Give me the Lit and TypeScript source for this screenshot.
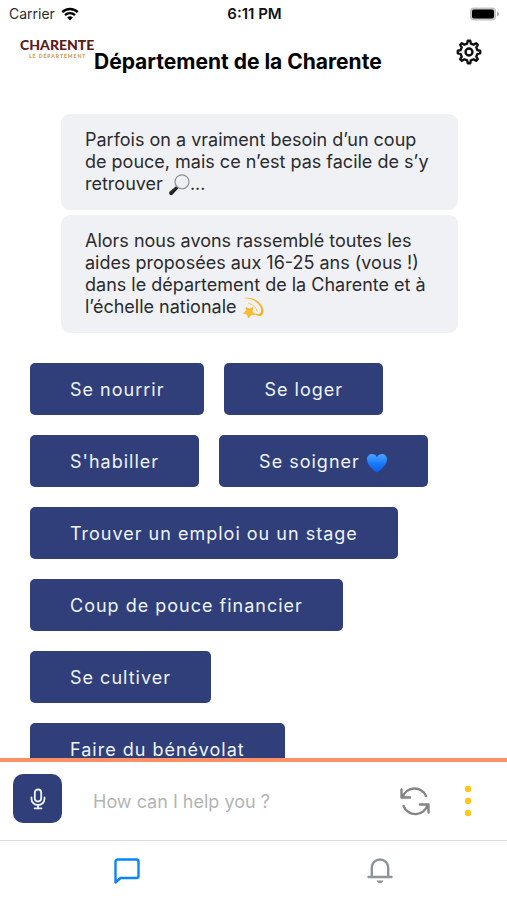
import { LitElement, html, css, svg } from "lit";
import { customElement } from "lit/decorators.js";

/** Outline of a cog with the given number of teeth, centred on 12,12. */
function cogPath(teeth: number, outer: number, inner: number): string {
  const step = (Math.PI * 2) / teeth;
  const at = (radius: number, angle: number) =>
    `${(12 + radius * Math.sin(angle)).toFixed(2)} ${(12 - radius * Math.cos(angle)).toFixed(2)}`;
  const parts: string[] = [];
  for (let i = 0; i < teeth; i++) {
    const a = i * step;
    parts.push(`${i ? "L" : "M"}${at(inner, a - step * 0.27)}`);
    parts.push(`L${at(outer, a - step * 0.14)}`);
    parts.push(`L${at(outer, a + step * 0.14)}`);
    parts.push(`L${at(inner, a + step * 0.27)}`);
  }
  return parts.join("") + "Z";
}

const wifiIcon = html`<svg class="wifi" viewBox="0 0 18 14" aria-hidden="true">
  <path d="M1.2 5.2a11 11 0 0 1 15.6 0" /><path d="M4 8.2a7 7 0 0 1 10 0" />
  <path class="solid" d="M9 13.4 6.2 10.6a4 4 0 0 1 5.6 0z" />
</svg>`;

const batteryIcon = html`<svg class="battery" viewBox="0 0 31 14" aria-hidden="true">
  <rect x="1" y="0.5" width="26" height="13" rx="4" fill="#c4c4c4" />
  <rect x="3" y="2.5" width="22" height="9" rx="2" fill="#000" />
  <path d="M28 4.5c2.6 1 2.6 4 0 5z" fill="#a8a8a8" />
</svg>`;

const gearIcon = html`<svg class="line gear" viewBox="0 0 24 24" aria-hidden="true">
  <path d=${cogPath(8, 10.4, 8)} /><circle cx="12" cy="12" r="3.2" />
</svg>`;

const lensEmoji = html`<svg class="emoji" viewBox="0 0 22 22" role="img" aria-label="Loupe">
  <defs><linearGradient id="handle" x1="0" y1="0" x2="1" y2="1">
    <stop offset="0" stop-color="#777" /><stop offset=".5" stop-color="#222" /><stop offset="1" stop-color="#000" />
  </linearGradient></defs>
  <path d="M9.5 11 11.5 13 4.6 20.6Q3.2 21.8 1.6 20.6 .4 19 1.6 17.6Z" fill="url(#handle)" />
  <path d="M8.8 11.6 10.9 13.6" stroke="#aaa" stroke-width="1.4" />
  <circle cx="14" cy="7.8" r="7" fill="#eceef1" stroke="#8f9194" stroke-width="1.2" />
  <path d="M10.2 7a4 4 0 0 1 4-3.4" stroke="#fff" stroke-width="1.2" fill="none" />
</svg>`;

const dizzyEmoji = html`<svg class="emoji" viewBox="0 0 22 22" role="img" aria-label="Étoile filante">
  <path d="M1.4 1.2C9 .8 15 4 18 9.4q2.4 5-.2 7-2.4 1.5-6.8-.6 4.6 4.2 8.2 3 3.8-2.2 1.4-8.6C17.4 3.4 9.5-.6 1.4 1.2z" fill="#f5b52a" />
  <path d="M6 6.2q7.5 1.8 9.2 8.2" stroke="#f8c95a" fill="none" />
  <path d="M4 10.2 7.4 12 11 10.600 10 14.4 13 17.600l-4.200.2L6.600 21l-1.500-3.700L1.400 16.200l3-2.400z" fill="#f9bd2c" stroke="#eaa51c" stroke-width=".5" />
</svg>`;

const heartEmoji = html`<svg class="emoji" viewBox="0 0 22 22" role="img" aria-label="Cœur bleu">
  <defs><linearGradient id="heart" x1="0" y1="0" x2="0" y2="1">
    <stop offset="0" stop-color="#4aa5ff" /><stop offset=".55" stop-color="#1877fb" /><stop offset="1" stop-color="#0b5ee8" />
  </linearGradient></defs>
  <path d="M11 20.6C6 16.5 1 12.5 1 7.4 1 4 3.3 2 6 2c2.2 0 4 1.2 5 3.2C12 3.2 13.8 2 16 2c2.7 0 5 2 5 5.4 0 5.1-5 9.1-10 13.2z" fill="url(#heart)" />
</svg>`;

const micIcon = html`<svg class="line mic" viewBox="0 0 16 22" aria-hidden="true">
  <rect x="4.8" y="1.5" width="6.4" height="12" rx="3.2" />
  <path d="M1.5 9.5v1.5a6.5 6 0 0 0 13 0V9.5M8 17v3M4.5 20.3h7" />
</svg>`;

const refreshIcon = html`<svg class="line refresh" viewBox="0 0 30 30" aria-hidden="true">
  <path d="M1.5 3.5v8H10M2.5 11.3A12.6 12.6 0 0 1 26 10" />
  <path d="M28.5 26.5v-8H20M27.5 18.7A12.6 12.6 0 0 1 3.500 20" />
</svg>`;

const chatIcon = html`<svg class="line tab-icon" viewBox="0 0 26 26" aria-hidden="true">
  <path d="M1.5 24.5V3.5a2 2 0 0 1 2-2h19a2 2 0 0 1 2 2v14.500a2 2 0 0 1-2 2H6.5z" />
</svg>`;

const bellIcon = html`<svg class="line tab-icon" viewBox="0 0 26 26" aria-hidden="true">
  <path d="M1.5 19H24.5M4.8 19V9.5a8.2 8 0 0 1 16.4 0V19" />
  <path d="M9.500 22.600h7c-.9 3.400-6.100 3.400-7 0z" fill="currentColor" stroke="none" />
</svg>`;

const topics = [
  { label: "Se nourrir" },
  { label: "Se loger" },
  { label: "S'habiller" },
  { label: "Se soigner", emoji: heartEmoji },
  { label: "Trouver un emploi ou un stage" },
  { label: "Coup de pouce financier" },
  { label: "Se cultiver" },
  { label: "Faire du bénévolat" },
];

@customElement("app-root")
export class AppRoot extends LitElement {
  static styles = css`
    :host {
      display: flex;
      flex-direction: column;
      height: 100vh;
      overflow: hidden;
      background: #fff;
      color: #2b2b2e;
      font-family: Inter, "Open Sans", sans-serif;
      font-size: 18px;
    }
    * { box-sizing: border-box; }
    svg { display: block; flex: none; }
    button { margin: 0; padding: 0; border: 0; background: none; font: inherit; color: inherit; cursor: pointer; }
    .line { fill: none; stroke: currentColor; stroke-width: 2; stroke-linecap: round; stroke-linejoin: round; }

    .status {
      display: grid;
      grid-template-columns: 1fr auto 1fr;
      align-items: center;
      height: 27px;
      padding: 0 7px 0 9px;
      font-size: 14px;
      flex: none;
    }
    .carrier { display: flex; align-items: center; gap: 6px; }
    .clock { font-size: 15px; font-weight: 600; color: #111; }
    .wifi { width: 18px; height: 14px; fill: none; stroke: #000; stroke-width: 2.4; }
    .wifi .solid { fill: #000; stroke: none; }
    .battery { width: 31px; height: 14px; justify-self: end; }

    .header { display: flex; align-items: flex-start; height: 67px; padding: 9px 25px 0 20px; flex: none; }
    .logo { width: 74px; white-space: nowrap; }
    .brand { font: 900 14px/17px Lato, sans-serif; color: #5c1a18; }
    .tagline { padding-left: 9px; font: 900 5px/6px Lato, sans-serif; letter-spacing: 1px; color: #cf9a3c; }
    h1 { flex: 1; margin: 14px 0 0; font-size: 21px; line-height: 24px; font-weight: 700; color: #000; white-space: nowrap; }
    .settings { margin-top: 3px; color: #111; }
    .gear { width: 26px; height: 26px; stroke-width: 2.2; }

    .chat { flex: 1; min-height: 0; overflow: hidden; padding: 20px 30px 0; }
    .messages { display: flex; flex-direction: column; gap: 5px; margin: 0 19px 30px 31px; }
    .bubble { margin: 0; padding: 15px 24px; border-radius: 9px; background: #f0f1f5; line-height: 22px; white-space: nowrap; }
    .emoji { display: inline-block; width: 22px; height: 22px; margin: -2px 0; vertical-align: -4px; }
    .topics { display: flex; flex-wrap: wrap; gap: 20px; }
    .topic {
      height: 52px;
      padding: 0 40px;
      border-radius: 5px;
      background: #303f7a;
      color: #eef4ff;
      letter-spacing: 1px;
      white-space: nowrap;
    }

    .composer {
      display: flex;
      align-items: center;
      height: 83px;
      padding: 0 35px 0 13px;
      border-top: 4px solid #ff9066;
      border-bottom: 1px solid #dcdcdc;
      flex: none;
    }
    .talk {
      display: grid;
      place-items: center;
      align-self: flex-start;
      width: 49px;
      height: 49px;
      margin-top: 12px;
      border-radius: 10px;
      background: #303f7a;
      color: #eef4ff;
    }
    .mic { width: 16px; height: 22px; stroke-width: 1.8; }
    .ask { flex: 1; min-width: 0; margin: 0 20px 0 31px; padding: 0; border: 0; outline: 0; font: inherit; color: #2b2b2e; background: none; }
    .ask::placeholder { color: #b4b4b4; opacity: 1; }
    .reload { color: #858585; margin-right: 34px; }
    .refresh { width: 30px; height: 30px; stroke-width: 2.4; }
    .dots { width: 8px; height: 32px; fill: #fdc913; }

    .tabs { display: grid; grid-template-columns: 1fr 1fr; height: 59px; flex: none; }
    .tab { display: grid; place-items: center; color: #8e9499; }
    .tab.current { color: #0a84ff; }
    .tab-icon { width: 26px; height: 26px; stroke-width: 2.4; }
  `;

  render() {
    return html`
      <div class="status">
        <div class="carrier">Carrier ${wifiIcon}</div>
        <div class="clock">6:11 PM</div>
        ${batteryIcon}
      </div>
      <header class="header">
        <div class="logo">
          <div class="brand">CHARENTE</div>
          <div class="tagline">LE DÉPARTEMENT</div>
        </div>
        <h1>Département de la Charente</h1>
        <button class="settings" aria-label="Paramètres">${gearIcon}</button>
      </header>
      <main class="chat">
        <div class="messages">
          <p class="bubble">
            Parfois on a vraiment besoin d’un coup<br />de pouce, mais ce n’est pas facile de s’y<br />retrouver
            ${lensEmoji}...
          </p>
          <p class="bubble">
            Alors nous avons rassemblé toutes les<br />aides proposées aux 16-25 ans (vous !)<br />dans le département
            de la Charente et à<br />l’échelle nationale ${dizzyEmoji}
          </p>
        </div>
        <div class="topics">
          ${topics.map((t) => html`<button class="topic">${t.label}${t.emoji ? html` ${t.emoji}` : ""}</button>`)}
        </div>
      </main>
      <div class="composer">
        <button class="talk" aria-label="Parler">${micIcon}</button>
        <input class="ask" type="text" aria-label="Message" placeholder="How can I help you ?" />
        <button class="reload" aria-label="Recommencer">${refreshIcon}</button>
        <button aria-label="Menu">
          <svg class="dots" viewBox="0 0 8 32" aria-hidden="true">
            ${[4, 16, 28].map((y) => svg`<circle cx="4" cy=${y} r="3.2" />`)}
          </svg>
        </button>
      </div>
      <nav class="tabs">
        <button class="tab current" aria-label="Discussion">${chatIcon}</button>
        <button class="tab" aria-label="Notifications">${bellIcon}</button>
      </nav>
    `;
  }
}
